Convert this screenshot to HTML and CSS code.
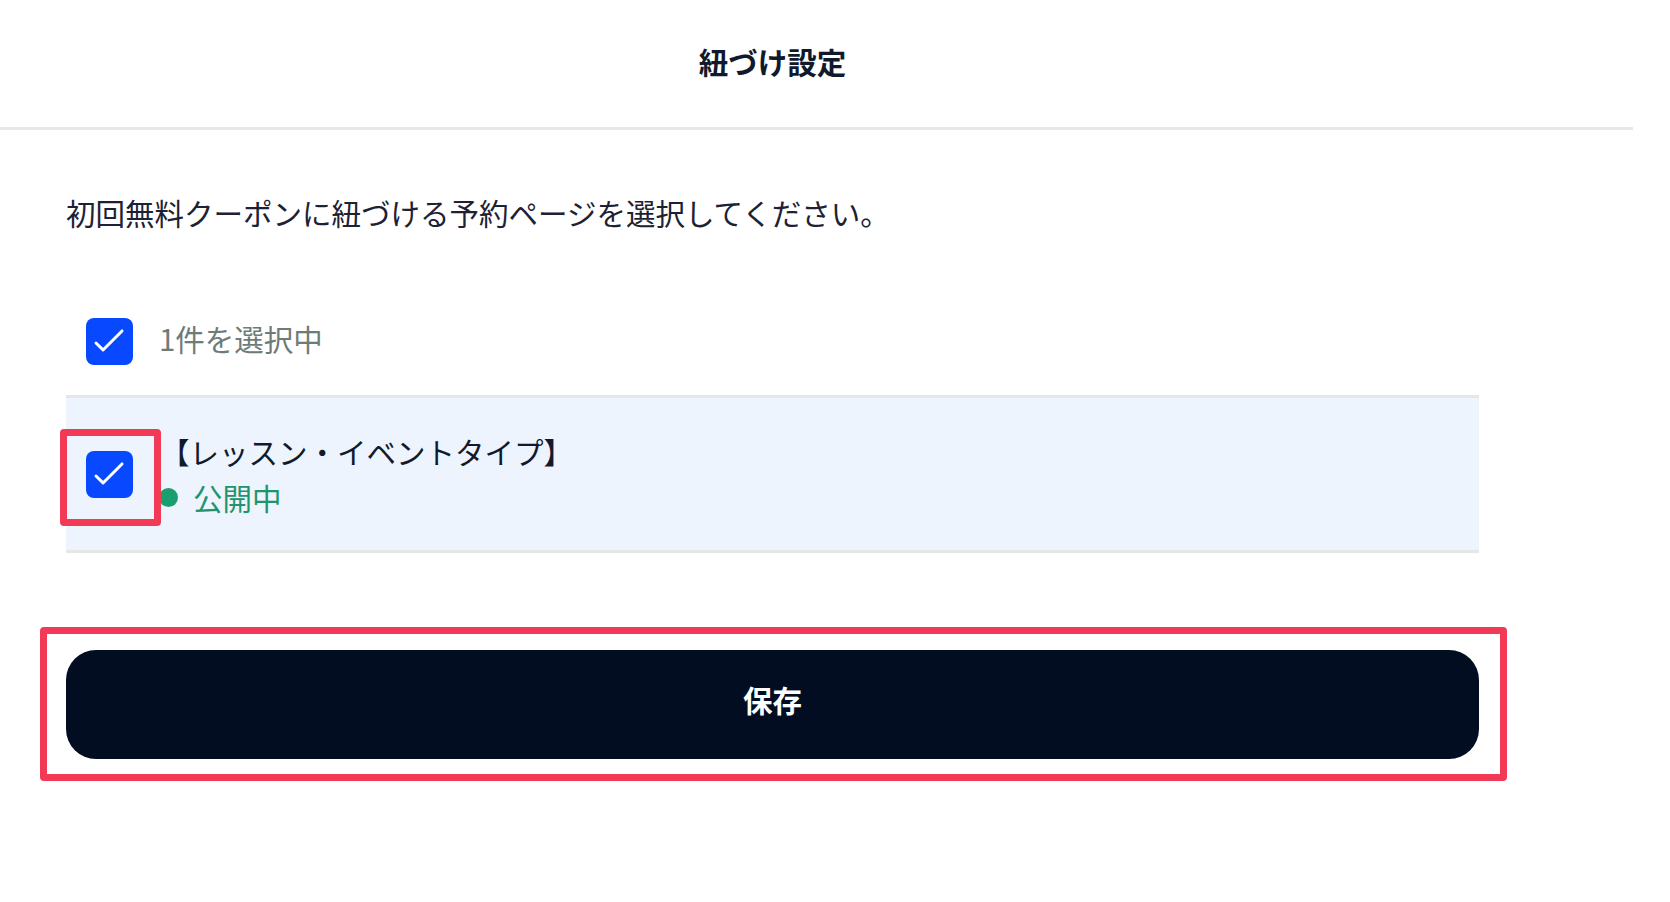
FILE: index.html
```html
<!DOCTYPE html>
<html lang="ja">
<head>
    <meta charset="UTF-8">
    <meta name="viewport" content="width=device-width, initial-scale=1.0">
    <title>紐づけ設定</title>
    <link rel="stylesheet" href="styles.css">
</head>
<body>
    <div class="modal">
        <div class="modal-header">
            <div class="modal-title">紐づけ設定</div>
        </div>
        <div class="modal-body">
            <p class="description">初回無料クーポンに紐づける予約ページを選択してください。</p>

            <div class="select-all">
                <span class="checkbox">
                    <svg viewBox="0 0 24 24"><path d="M5.1 12.8 L8.7 16.3 L18.4 6.6"/></svg>
                </span>
                <span class="select-count">1件を選択中</span>
            </div>

            <div class="page-item">
                <span class="checkbox">
                    <svg viewBox="0 0 24 24"><path d="M5.1 12.8 L8.7 16.3 L18.4 6.6"/></svg>
                    <span class="mark mark-check"></span>
                </span>
                <div class="page-info">
                    <div class="page-name">【レッスン・イベントタイプ】</div>
                    <div class="page-status"><span class="dot"></span>公開中</div>
                </div>
            </div>

            <div class="save-wrap">
                <button class="save-btn">保存</button>
                <span class="mark mark-btn"></span>
            </div>
        </div>
    </div>
</body>
</html>
```

FILE: styles.css
```css
body {
    margin: 0;
    background: #ffffff;
    font-family: "Noto Sans CJK JP", "Noto Sans", sans-serif;
    font-size: 29.5px;
    color: #1c2233;
}
.modal {
    width: 1633px;
}
.modal-header {
    height: 130px;
    box-sizing: border-box;
    border-bottom: 3px solid #e8e8e6;
    padding: 0 0 5px 66px;
    display: flex;
    align-items: center;
}
.modal-title {
    width: 1413px;
    text-align: center;
    font-weight: bold;
    line-height: 42px;
    color: #111a2c;
}
.modal-body {
    padding: 0 0 120px 66px;
    width: 1413px;
}
.description {
    margin: 61px 0 0 0;
    line-height: 42px;
}
.select-all {
    display: flex;
    align-items: center;
    gap: 26px;
    margin-top: 84px;
    padding: 0 0 30px 20px;
}
.checkbox {
    position: relative;
    flex: none;
    width: 47px;
    height: 47px;
    border-radius: 8px;
    background: #0849ff;
    display: flex;
    align-items: center;
    justify-content: center;
}
.checkbox svg {
    width: 47px;
    height: 47px;
    fill: none;
    stroke: #ffffff;
    stroke-width: 1.5;
    stroke-linecap: round;
    stroke-linejoin: round;
}
.select-count {
    color: #6d7c79;
    line-height: 42px;
    margin-bottom: 6px;
}
.page-item {
    display: flex;
    align-items: center;
    gap: 27px;
    height: 152px;
    padding-left: 20px;
    background: #edf4fe;
    border-top: 3px solid #e6e6e4;
    border-bottom: 3px solid #e6e6e4;
}
.page-info {
    line-height: 46px;
}
.page-name {
    color: #111a2c;
}
.page-status {
    display: flex;
    align-items: center;
    color: #22946b;
}
.dot {
    width: 19px;
    height: 19px;
    border-radius: 50%;
    background: #1a9e6e;
    margin: 0 15px 0 -1px;
}
.mark {
    position: absolute;
    top: -23px;
    bottom: -22px;
    left: -26px;
    right: -28px;
    border: 7px solid #f23a57;
    border-radius: 4px;
}
.mark-check {
    top: -22px;
    bottom: -28px;
}
.save-wrap {
    position: relative;
    margin-top: 97px;
}
.save-btn {
    display: block;
    width: 100%;
    height: 109px;
    padding: 0 0 12px 0;
    border: none;
    border-radius: 30px;
    background: #020d21;
    color: #ffffff;
    font-family: inherit;
    font-size: 29.5px;
    font-weight: bold;
    cursor: pointer;
}
```
